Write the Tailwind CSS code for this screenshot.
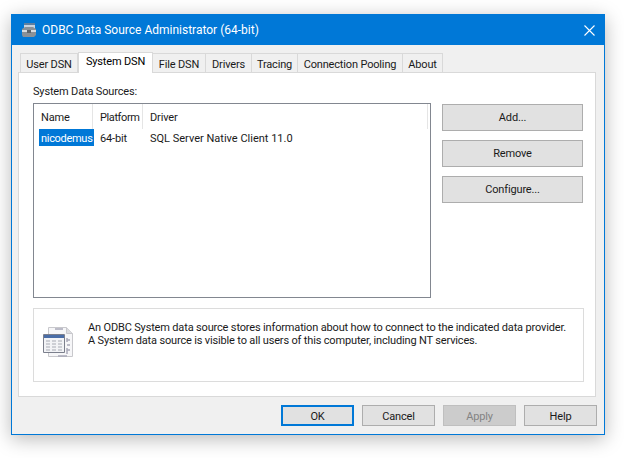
<!DOCTYPE html>
<html lang="en">
<head>
<meta charset="UTF-8">
<title>ODBC Data Source Administrator (64-bit)</title>
<script src="https://cdn.jsdelivr.net/npm/@tailwindcss/browser@4"></script>
</head>
<body class="bg-white overflow-hidden w-[624px] h-[458px] font-['Roboto','Liberation_Sans',sans-serif] text-[11px] tracking-[-0.16px] text-black">
<div class="pl-[11px] pt-[14px]">
  <!-- window -->
  <div class="w-[594px] h-[421px] border border-[#0078d7] bg-[#f0f0f0] shadow-[0_4px_18px_rgba(0,0,0,0.28)]">
    <!-- title bar -->
    <div class="h-[30px] bg-[#0078d7] flex items-center text-white">
      <svg class="ml-[9px] w-[16px] h-[16px]" viewBox="0 0 16 16">
        <path d="M3 1h11v6H3z" fill="#c9d3de"/>
        <path d="M3 1h11v2H3z" fill="#5f7f9f"/>
        <path d="M1 7l3-2h8l3 2v6l-2 2H2l-1-2z" fill="#8a9198"/>
        <path d="M1 8h14v2H1z" fill="#d8dce0"/>
        <path d="M6 8h4v3H6z" fill="#5d646b"/>
      </svg>
      <span class="ml-[5px] text-[12px] tracking-normal leading-none">ODBC Data Source Administrator (64-bit)</span>
      <svg class="ml-auto mr-[9px] w-[11px] h-[11px]" viewBox="0 0 11 11">
        <path d="M0.5 0.5l10 10M10.5 0.5l-10 10" stroke="#fff" stroke-width="1.1" fill="none"/>
      </svg>
    </div>
    <!-- tabs -->
    <div class="h-[27px] pl-[8px] flex items-end relative z-10 text-[#1a1a1a] whitespace-nowrap">
      <div class="w-[58px] h-[19px] pt-[4px] border border-b-0 border-[#d9d9d9] flex items-center justify-center">User DSN</div>
      <div class="w-[75px] h-[21px] -mb-px bg-white border border-b-0 border-[#d9d9d9] flex items-center justify-center pb-[1px] text-black">System DSN</div>
      <div class="w-[53px] h-[19px] pt-[4px] border border-l-0 border-b-0 border-[#d9d9d9] flex items-center justify-center">File DSN</div>
      <div class="w-[46px] h-[19px] pt-[4px] border border-l-0 border-b-0 border-[#d9d9d9] flex items-center justify-center">Drivers</div>
      <div class="w-[46px] h-[19px] pt-[4px] border border-l-0 border-b-0 border-[#d9d9d9] flex items-center justify-center">Tracing</div>
      <div class="w-[105px] h-[19px] pt-[4px] border border-l-0 border-b-0 border-[#d9d9d9] flex items-center justify-center">Connection Pooling</div>
      <div class="w-[40px] h-[19px] pt-[4px] border border-l-0 border-b-0 border-[#d9d9d9] flex items-center justify-center">About</div>
    </div>
    <!-- panel -->
    <div class="ml-[6px] w-[578px] h-[325px] bg-white border border-[#d9d9d9] pl-[14px] pt-[10px]">
      <div class="leading-[15px] h-[20px] pt-px text-[#1a1a1a]">System Data Sources:</div>
      <div class="flex">
        <!-- list -->
        <div class="w-[398px] h-[195px] border border-[#828790] bg-white">
          <div class="h-[25px] flex items-center text-[#1a1a1a]">
            <div class="w-[59px] h-full pl-[7px] pt-[4px] flex items-center border-r border-[#e5e5e5]">Name</div>
            <div class="w-[50px] h-full pl-[7px] pt-[4px] flex items-center border-r border-[#e5e5e5] tracking-[-0.4px]">Platform</div>
            <div class="w-[285px] h-full pl-[7px] pt-[4px] flex items-center border-r border-[#e5e5e5]">Driver</div>
          </div>
          <div class="flex h-[17px] items-center text-[#1a1a1a]">
            <div class="ml-[5px] w-[55px] h-full bg-[#0078d7] text-white pl-[2px] pt-[3px] flex items-center tracking-[-0.3px]">nicodemus</div>
            <div class="w-[50px] pl-[6px] h-full pt-[3px] flex items-center">64-bit</div>
            <div class="pl-[6px] h-full pt-[3px] flex items-center tracking-normal">SQL Server Native Client 11.0</div>
          </div>
        </div>
        <!-- side buttons -->
        <div class="ml-[11px] w-[141px] pt-px flex flex-col gap-[9px] text-[#1a1a1a]">
          <div class="h-[27px] pt-[2px] bg-[#e1e1e1] border border-[#adadad] flex items-center justify-center">Add...</div>
          <div class="h-[27px] pt-[2px] bg-[#e1e1e1] border border-[#adadad] flex items-center justify-center">Remove</div>
          <div class="h-[27px] pt-[2px] bg-[#e1e1e1] border border-[#adadad] flex items-center justify-center">Configure...</div>
        </div>
      </div>
      <!-- info box -->
      <div class="mt-[10px] w-[551px] h-[74px] border border-[#dcdcdc] flex">
        <svg class="ml-[9px] mt-[17px] w-[32px] h-[32px] shrink-0" viewBox="0 0 32 32">
          <path d="M5.5 1.5h18l6 6v23h-24z" fill="#f6f6f8" stroke="#c8c8cc"/>
          <path d="M23.5 1.5v6h6" fill="#dcdce0" stroke="#c8c8cc"/>
          <path d="M12 3h8M24 14h3M24 19h3M24 24h3M24 12v4M24 22v6M15 30h9" stroke="#a9a9b8" stroke-width="1.5" fill="none"/>
          <path d="M0.5 8.5h21v18h-21z" fill="#f2f3f6" stroke="#7b7f8c"/>
          <path d="M1 9h20v3H1z" fill="#4a6da7"/>
          <path d="M3 15h4M9 15h4M15 15h4M3 18h4M9 18h4M15 18h4M3 21h4M9 21h4M15 21h4M3 24h4M9 24h4M15 24h4" stroke="#a8abb4" fill="none"/>
        </svg>
        <p class="ml-[13px] mt-[12px] leading-[13px] text-[#1a1a1a] whitespace-nowrap">An ODBC System data source stores information about how to connect to the indicated data provider.<br>A System data source is visible to all users of this computer, including NT services.</p>
      </div>
    </div>
    <!-- bottom buttons -->
    <div class="pt-[8px] pl-[269px] flex gap-[8px] text-[#1a1a1a]">
      <div class="w-[73px] h-[21px] pt-[3px] bg-[#e1e1e1] border-2 border-[#0078d7] flex items-center justify-center">OK</div>
      <div class="w-[73px] h-[21px] pt-[3px] bg-[#e1e1e1] border border-[#adadad] flex items-center justify-center">Cancel</div>
      <div class="w-[73px] h-[21px] pt-[3px] bg-[#cccccc] border border-[#bfbfbf] text-[#838383] flex items-center justify-center">Apply</div>
      <div class="w-[73px] h-[21px] pt-[3px] bg-[#e1e1e1] border border-[#adadad] flex items-center justify-center">Help</div>
    </div>
  </div>
</div>
</body>
</html>
